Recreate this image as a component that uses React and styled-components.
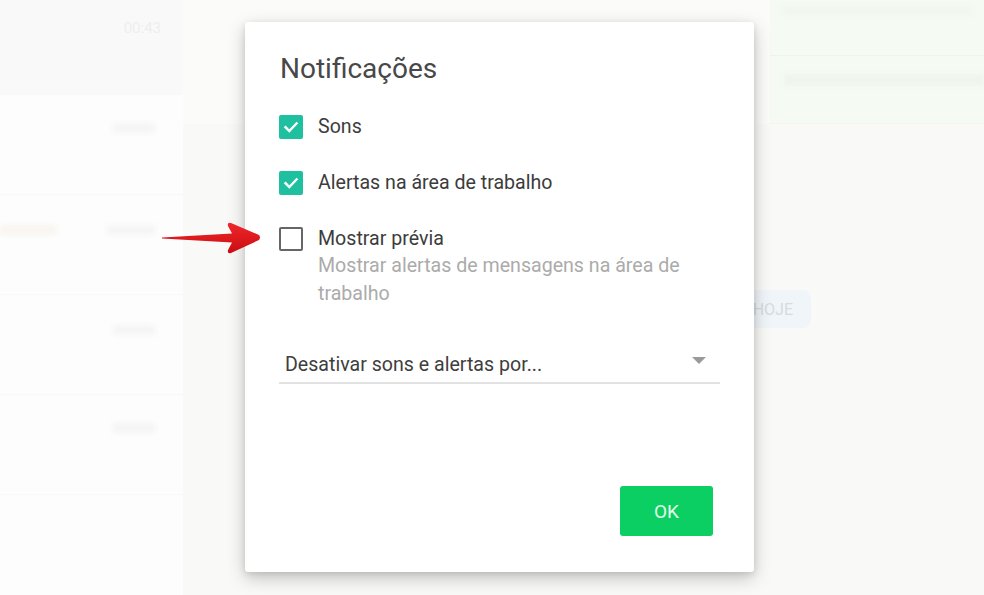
import React from 'react'
import styled, { createGlobalStyle } from 'styled-components'

const Global = createGlobalStyle`
  html, body { margin: 0; padding: 0; }
  body {
    width: 984px;
    height: 595px;
    overflow: hidden;
    font-family: Roboto, "Liberation Sans", Arial, sans-serif;
    background: #f8f8f6;
  }
`

const Page = styled.div`
  position: relative;
  display: flex;
  width: 984px;
  height: 595px;
  overflow: hidden;
`

const Sidebar = styled.div`
  width: 183px;
  display: flex;
  flex-direction: column;
  background: #fdfdfd;
  box-shadow: 4px 0 8px rgba(0, 0, 0, 0.03);
`

const SideHeader = styled.div`
  height: 95px;
  background: #f8f8f8;
  display: flex;
  justify-content: flex-end;
  padding: 19px 22px 0 0;
  box-sizing: border-box;
  color: #ececec;
  font-size: 15px;
`

const ChatRow = styled.div`
  height: 100px;
  border-bottom: 1px solid #f7f7f7;
  display: flex;
  align-items: flex-start;
  justify-content: space-between;
  padding: ${(p) => p.$pad || '28px'} 28px 0 0;
  box-sizing: border-box;
`

const Blob = styled.div`
  width: ${(p) => p.$w}px;
  height: ${(p) => p.$h || 10}px;
  background: ${(p) => p.$c || '#f4f4f4'};
  filter: blur(2px);
`

const Chat = styled.div`
  flex: 1;
  display: flex;
  flex-direction: column;
  background: #f8f8f6;
`

const ChatTop = styled.div`
  height: 124px;
  display: flex;
`

const TopPlain = styled.div`
  width: 587px;
  background: #fbfbfa;
`

const TopGreen = styled.div`
  flex: 1;
  background: #f4fbf1;
  display: flex;
  flex-direction: column;
  border-bottom: 1px solid #f0f5ee;
`

const GreenLine = styled.div`
  height: 56px;
  border-bottom: 1px solid #ebf2e8;
  padding: 6px 0 0 12px;
  box-sizing: border-box;
`

const GreenBody = styled.div`
  padding: 18px 0 0 14px;
`

const DayRow = styled.div`
  display: flex;
  justify-content: flex-start;
  padding: 166px 0 0 550px;
`

const DayChip = styled.div`
  width: 78px;
  height: 38px;
  border-radius: 8px;
  background: #eef4f9;
  color: #cfd5da;
  font-size: 16px;
  display: flex;
  align-items: center;
  justify-content: flex-end;
  padding-right: 18px;
  box-sizing: border-box;
`

const Backdrop = styled.div`
  position: absolute;
  inset: 0;
  background: rgba(255, 255, 255, 0.15);
`

const Dialog = styled.div`
  position: absolute;
  left: 245px;
  top: 22px;
  width: 509px;
  height: 550px;
  box-sizing: border-box;
  background: #fff;
  border-radius: 3px;
  box-shadow: 0 6px 18px rgba(0, 0, 0, 0.22), 0 2px 6px rgba(0, 0, 0, 0.1);
  padding: 28px 34px 36px 34px;
  display: flex;
  flex-direction: column;
`

const Title = styled.h2`
  margin: 0 0 27px 1px;
  font-weight: 400;
  font-size: 28px;
  line-height: 38px;
  color: #484848;
`

const Options = styled.div`
  display: flex;
  flex-direction: column;
  gap: 32px;
`

const Option = styled.div`
  display: flex;
  align-items: flex-start;
  gap: 15px;
`

const Box = styled.div`
  width: 24px;
  height: 24px;
  box-sizing: border-box;
  border-radius: 2px;
  flex-shrink: 0;
  display: flex;
  align-items: center;
  justify-content: center;
  background: ${(p) => (p.$checked ? '#1fc0a0' : '#fff')};
  border: ${(p) => (p.$checked ? 'none' : '2px solid #666')};
`

const Texts = styled.div`
  display: flex;
  flex-direction: column;
`

const Label = styled.div`
  font-size: 19.6px;
  line-height: 24px;
  color: #3c3c3c;
`

const Hint = styled.div`
  font-size: 19.6px;
  line-height: 28px;
  margin-top: 1px;
  color: #ababab;
  width: 390px;
`

const Select = styled.div`
  margin-top: 36px;
  height: 40px;
  border-bottom: 2px solid #e2e2e2;
  display: flex;
  align-items: center;
  justify-content: space-between;
  padding: 0 14px 0 6px;
  box-sizing: border-box;
  width: 441px;
`

const SelectText = styled.span`
  font-size: 19.6px;
  color: #3e3e3e;
  margin-top: 2px;
`

const Caret = styled.span`
  width: 0;
  height: 0;
  border-left: 7px solid transparent;
  border-right: 7px solid transparent;
  border-top: 7px solid #9b9b9b;
  margin-top: -6px;
`

const Footer = styled.div`
  margin-top: auto;
  display: flex;
  justify-content: flex-end;
  padding-right: 7px;
`

const OkButton = styled.button`
  width: 93px;
  height: 50px;
  border: none;
  border-radius: 3px;
  background: #0bcf62;
  color: #e3fbe9;
  font-family: inherit;
  font-size: 19px;
  font-weight: 400;
`

const Arrow = styled.svg`
  position: absolute;
  left: 160px;
  top: 218px;
`

const Check = () => (
  <svg width="16" height="16" viewBox="0 0 16 16">
    <path d="M2.5 8.2 L6.3 12 L13.6 4.4" fill="none" stroke="#fff" strokeWidth="2.4" strokeLinecap="square" />
  </svg>
)

const rows = [
  { pad: '28px', w: 42 },
  { pad: '30px', w: 48 },
  { pad: '30px', w: 42 },
  { pad: '28px', w: 42 },
]

export default function App() {
  return (
    <Page>
      <Global />
      <Sidebar>
        <SideHeader>00:43</SideHeader>
        {rows.map((r, i) => (
          <ChatRow key={i} $pad={r.pad}>
            <Blob $w={i === 1 ? 56 : 0} $c="#f8f4ee" />
            <Blob $w={r.w} />
          </ChatRow>
        ))}
      </Sidebar>
      <Chat>
        <ChatTop>
          <TopPlain />
          <TopGreen>
            <GreenLine>
              <Blob $w={190} $h={10} $c="#eff6ec" />
            </GreenLine>
            <GreenBody>
              <Blob $w={200} $h={12} $c="#edf4ea" />
            </GreenBody>
          </TopGreen>
        </ChatTop>
        <DayRow>
          <DayChip>HOJE</DayChip>
        </DayRow>
      </Chat>
      <Backdrop />
      <Dialog>
        <Title>Notificações</Title>
        <Options>
          <Option>
            <Box $checked><Check /></Box>
            <Label>Sons</Label>
          </Option>
          <Option>
            <Box $checked><Check /></Box>
            <Label>Alertas na área de trabalho</Label>
          </Option>
          <Option>
            <Box />
            <Texts>
              <Label>Mostrar prévia</Label>
              <Hint>Mostrar alertas de mensagens na área de trabalho</Hint>
            </Texts>
          </Option>
        </Options>
        <Select>
          <SelectText>Desativar sons e alertas por...</SelectText>
          <Caret />
        </Select>
        <Footer>
          <OkButton>OK</OkButton>
        </Footer>
      </Dialog>
      <Arrow width="104" height="40" viewBox="0 0 104 40">
        <defs>
          <linearGradient id="red" x1="0" y1="0" x2="0" y2="1">
            <stop offset="0" stopColor="#f0262a" />
            <stop offset="1" stopColor="#c90d12" />
          </linearGradient>
        </defs>
        <path
          d="M2 19.5 L72 15.5 L68 8 Q67 4 71 5 L99 17 Q101 19.5 99 22 L71 35 Q67 36 68 32 L72 24.5 L2 20.5 Z"
          fill="url(#red)"
        />
      </Arrow>
    </Page>
  )
}
